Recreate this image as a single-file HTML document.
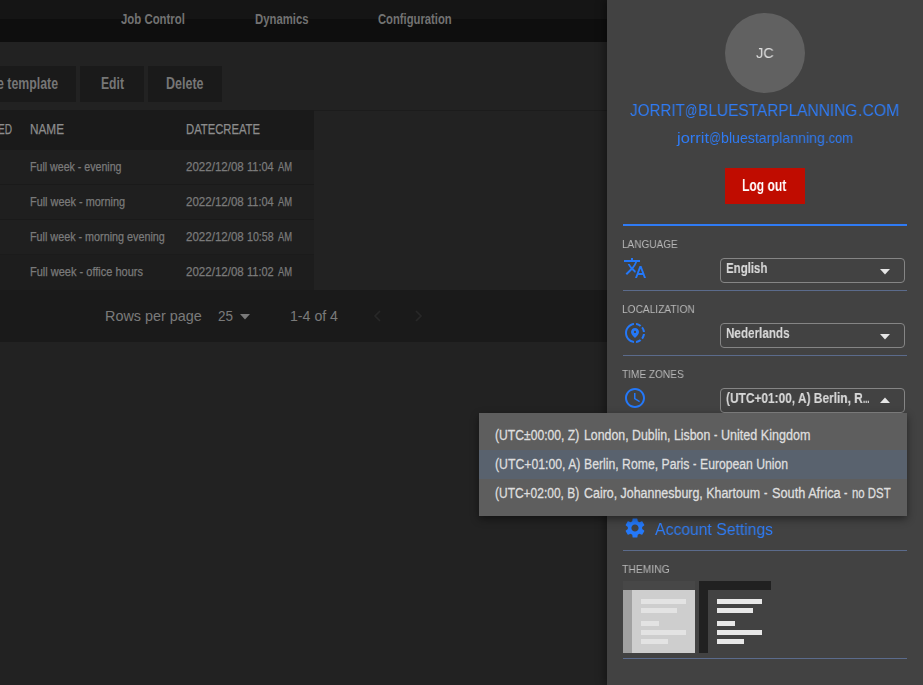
<!DOCTYPE html>
<html><head><meta charset="utf-8"><title>Templates</title>
<style>
html,body{margin:0;padding:0;}
body{width:923px;height:685px;overflow:hidden;position:relative;background:#1e1e1e;font-family:"Liberation Sans",sans-serif;}
.a{position:absolute;}
.t{position:absolute;white-space:nowrap;transform-origin:0 50%;font-family:"Liberation Sans",sans-serif;}
.sel{left:720px;width:183px;height:23px;border:1px solid #858585;border-radius:4px;}
.div{left:623px;width:284px;height:1px;background:#5b6b8c;}
.lb{height:4.8px;background:#e3e3e3;}
.db{height:4.8px;background:#e7e7e7;}
.g{will-change:transform;}

</style></head>
<body>
<!-- left (dimmed) app area -->
<div class="a" style="left:0;top:0;width:607px;height:19px;background:#151515"></div>
<div class="a" style="left:0;top:19px;width:607px;height:23px;background:#0e0e0e"></div>
<div class="a" style="left:0;top:42px;width:607px;height:643px;background:#222222"></div>
<!-- toolbar buttons -->
<div class="a" style="left:-20px;top:66px;width:96px;height:36px;background:#1a1a1a"></div>
<div class="a" style="left:80px;top:66px;width:64px;height:36px;background:#1a1a1a"></div>
<div class="a" style="left:148px;top:66px;width:74px;height:36px;background:#1a1a1a"></div>
<div class="a" style="left:0;top:110px;width:607px;height:1px;background:#1c1c1c"></div>
<!-- table -->
<div class="a" style="left:0;top:110px;width:314px;height:40px;background:#1a1a1a"></div>
<div class="a" style="left:0;top:150px;width:314px;height:105px;background:#1f1f1f"></div>
<div class="a" style="left:0;top:254px;width:314px;height:36px;background:#1d1d1d"></div>
<div class="a" style="left:0;top:254px;width:314px;height:1px;background:#1b1b1b"></div>
<div class="a" style="left:0;top:184px;width:314px;height:1px;background:#1a1a1a"></div>
<div class="a" style="left:0;top:219px;width:314px;height:1px;background:#1a1a1a"></div>
<!-- pagination -->
<div class="a" style="left:0;top:290px;width:607px;height:52px;background:#1a1a1a"></div>
<svg class="a" style="left:240px;top:313.5px" width="10" height="6" viewBox="0 0 10 6"><path d="M0 0h10L5 5.6z" fill="#7a7a7a"/></svg>
<svg class="a" style="left:373px;top:310px" width="10" height="12" viewBox="0 0 10 12"><path d="M7 1L2 6l5 5" stroke="#282828" stroke-width="1.6" fill="none"/></svg>
<svg class="a" style="left:413px;top:310px" width="10" height="12" viewBox="0 0 10 12"><path d="M3 1l5 5-5 5" stroke="#282828" stroke-width="1.6" fill="none"/></svg>

<!-- right drawer -->
<div class="a" style="left:607px;top:0;width:316px;height:685px;background:#424242;box-shadow:-3px 0 8px rgba(0,0,0,.35)"></div>
<div class="a" style="left:725px;top:13px;width:80px;height:80px;border-radius:50%;background:#616161"></div>
<div class="a" style="left:725px;top:168px;width:80px;height:36px;background:#c00c00"></div>
<div class="a" style="left:623px;top:224px;width:284px;height:2px;background:#2f7bf5"></div>
<!-- selects -->
<div class="a sel" style="top:258px"></div>
<div class="a sel" style="top:323px"></div>
<div class="a sel" style="top:388px"></div>
<svg class="a" style="left:880px;top:269px" width="10" height="6" viewBox="0 0 10 6"><path d="M0 0h10L5 5.5z" fill="#e6e6e6"/></svg>
<svg class="a" style="left:880px;top:334px" width="10" height="6" viewBox="0 0 10 6"><path d="M0 0h10L5 5.5z" fill="#e6e6e6"/></svg>
<svg class="a" style="left:880px;top:397px" width="10" height="6" viewBox="0 0 10 6"><path d="M0 6h10L5 0.5z" fill="#e6e6e6"/></svg>
<!-- dividers -->
<div class="a div" style="top:290px"></div>
<div class="a div" style="top:355px"></div>
<div class="a div" style="top:550px"></div>
<div class="a div" style="top:658px"></div>
<!-- icons -->
<svg class="a" style="left:623px;top:256px" width="24" height="24" viewBox="0 0 24 24"><path fill="#2478f8" d="M12.87 15.07l-2.54-2.51.03-.03A17.52 17.52 0 0 0 14.07 6H17V4h-7V2H8v2H1v1.99h11.17C11.5 7.92 10.44 9.75 9 11.35 8.07 10.32 7.3 9.19 6.69 8h-2c.73 1.63 1.73 3.17 2.98 4.56l-5.09 5.02L4 19l5-5 3.11 3.11.76-2.04zM18.5 10h-2L12 22h2l1.12-3h4.75L21 22h2l-4.5-12zm-2.62 7l1.62-4.33L19.12 17h-3.24z"/></svg>
<svg class="a" style="left:623px;top:321px" width="24" height="24" viewBox="0 0 24 24"><path fill="#2478f8" d="M13.02 19.93v2.02c2.01-.2 3.84-1 5.32-2.21l-1.42-1.43c-1.11.86-2.44 1.44-3.9 1.62zM4.03 12c0-4.05 3.03-7.41 6.95-7.93V2.05C5.95 2.58 2.03 6.84 2.03 12c0 5.16 3.92 9.42 8.95 9.95v-2.02c-3.92-.52-6.95-3.88-6.95-7.93zm15.92-1h2.02c-.2-2.01-1-3.84-2.21-5.32l-1.43 1.43c.86 1.1 1.44 2.43 1.62 3.89zm-1.61-6.74c-1.48-1.21-3.32-2.01-5.32-2.21v2.02c1.46.18 2.79.76 3.9 1.62l1.42-1.43zm-.01 12.64l1.43 1.42c1.21-1.48 2.01-3.31 2.21-5.32h-2.02c-.18 1.46-.76 2.79-1.62 3.9zM16 11.1C16 8.61 14.1 7 12 7s-4 1.61-4 4.1c0 1.66 1.33 3.63 4 5.9 2.67-2.27 4-4.24 4-5.9zM12 12c-.59 0-1.07-.48-1.07-1.07 0-.59.48-1.07 1.07-1.07s1.07.48 1.07 1.07c0 .59-.48 1.07-1.07 1.07z"/></svg>
<svg class="a" style="left:623px;top:386px" width="24" height="24" viewBox="0 0 24 24"><path fill="#2478f8" d="M11.99 2C6.47 2 2 6.48 2 12s4.47 10 9.99 10C17.52 22 22 17.52 22 12S17.52 2 11.99 2zM12 20c-4.42 0-8-3.58-8-8s3.58-8 8-8 8 3.58 8 8-3.58 8-8 8zm.5-13H11v6l5.25 3.15.75-1.23-4.5-2.67z"/></svg>
<svg class="a" style="left:623px;top:516px" width="24" height="24" viewBox="0 0 24 24"><path fill="#2478f8" d="M19.14 12.94c.04-.3.06-.61.06-.94 0-.32-.02-.64-.07-.94l2.03-1.58a.49.49 0 0 0 .12-.61l-1.92-3.32a.488.488 0 0 0-.59-.22l-2.39.96c-.5-.38-1.03-.7-1.62-.94l-.36-2.54a.484.484 0 0 0-.48-.41h-3.84c-.24 0-.43.17-.47.41l-.36 2.54c-.59.24-1.13.57-1.62.94l-2.39-.96c-.22-.08-.47 0-.59.22L2.74 8.87c-.12.21-.08.47.12.61l2.03 1.58c-.05.3-.09.63-.09.94s.02.64.07.94l-2.03 1.58a.49.49 0 0 0-.12.61l1.92 3.32c.12.22.37.29.59.22l2.39-.96c.5.38 1.03.7 1.62.94l.36 2.54c.05.24.24.41.48.41h3.84c.24 0 .44-.17.47-.41l.36-2.54c.59-.24 1.13-.56 1.62-.94l2.39.96c.22.08.47 0 .59-.22l1.92-3.32c.12-.22.07-.47-.12-.61l-2.01-1.58zM12 15.6c-1.98 0-3.6-1.62-3.6-3.6s1.62-3.6 3.6-3.6 3.6 1.62 3.6 3.6-1.62 3.6-3.6 3.6z"/></svg>
<!-- theme thumbs -->
<div class="a" style="left:623px;top:581px;width:72px;height:72px;background:#cecece"></div>
<div class="a" style="left:623px;top:581px;width:72px;height:9px;background:#474747"></div>
<div class="a" style="left:623px;top:590px;width:9px;height:63px;background:#a1a1a1"></div>
<div class="a lb" style="left:641px;top:598.8px;width:45px"></div>
<div class="a lb" style="left:641px;top:607.8px;width:36px"></div>
<div class="a lb" style="left:641px;top:621.3px;width:18px"></div>
<div class="a lb" style="left:641px;top:630.3px;width:45px"></div>
<div class="a lb" style="left:641px;top:639.4px;width:27px"></div>
<div class="a" style="left:699px;top:581px;width:72px;height:72px;background:#424242"></div>
<div class="a" style="left:699px;top:581px;width:72px;height:9px;background:#212121"></div>
<div class="a" style="left:699px;top:590px;width:9px;height:63px;background:#212121"></div>
<div class="a db" style="left:717px;top:598.8px;width:45px"></div>
<div class="a db" style="left:717px;top:607.8px;width:36px"></div>
<div class="a db" style="left:717px;top:621.3px;width:18px"></div>
<div class="a db" style="left:717px;top:630.3px;width:45px"></div>
<div class="a db" style="left:717px;top:639.4px;width:27px"></div>
<!-- dropdown -->
<div class="a" style="left:479px;top:413px;width:428px;height:103px;background:#5e5e5e;box-shadow:0 3px 8px rgba(0,0,0,.45)"></div>
<div class="a" style="left:479px;top:450px;width:428px;height:29px;background:#59626e"></div>

<span class="t" style="left:121.1px;top:10.4px;font-size:15.3px;line-height:18px;font-weight:700;color:#727272;transform:scaleX(0.7445)">Job Control</span>
<span class="t" style="left:254.8px;top:10.4px;font-size:15.3px;line-height:18px;font-weight:700;color:#727272;transform:scaleX(0.7402)">Dynamics</span>
<span class="t" style="left:378.3px;top:10.4px;font-size:15.3px;line-height:18px;font-weight:700;color:#727272;transform:scaleX(0.7350)">Configuration</span>
<span class="t" style="left:-3.0px;top:73.8px;font-size:16px;line-height:19px;font-weight:700;color:#767676;transform:scaleX(0.7708)">e template</span>
<span class="t" style="left:101.0px;top:73.8px;font-size:16px;line-height:19px;font-weight:700;color:#767676;transform:scaleX(0.7611)">Edit</span>
<span class="t" style="left:166.0px;top:73.8px;font-size:16px;line-height:19px;font-weight:700;color:#767676;transform:scaleX(0.7807)">Delete</span>
<span class="t" style="left:-2.0px;top:121.0px;font-size:14px;line-height:17px;font-weight:400;color:#8c8c8c;-webkit-text-stroke:0.25px #8c8c8c;transform:scaleX(0.7197)">ED</span>
<span class="t" style="left:30.0px;top:121.0px;font-size:14px;line-height:17px;font-weight:400;color:#8c8c8c;-webkit-text-stroke:0.25px #8c8c8c;transform:scaleX(0.8405)">NAME</span>
<span class="t" style="left:186.0px;top:121.0px;font-size:14px;line-height:17px;font-weight:400;color:#8c8c8c;-webkit-text-stroke:0.25px #8c8c8c;transform:scaleX(0.8039)">DATECREATE</span>
<span class="t" style="left:30.0px;top:159.9px;font-size:12.25px;line-height:15px;font-weight:400;color:#7a7a7a;-webkit-text-stroke:0.25px #7a7a7a;transform:scaleX(0.8669)">Full week - evening</span>
<span class="t" style="left:185.8px;top:159.9px;font-size:12.25px;line-height:15px;font-weight:400;color:#7a7a7a;-webkit-text-stroke:0.25px #7a7a7a;transform:scaleX(0.9427)">2022/12/08</span>
<span class="t" style="left:247.3px;top:159.9px;font-size:12.25px;line-height:15px;font-weight:400;color:#7a7a7a;-webkit-text-stroke:0.25px #7a7a7a;transform:scaleX(0.8975)">11:04</span>
<span class="t" style="left:278.2px;top:159.9px;font-size:12.25px;line-height:15px;font-weight:400;color:#7a7a7a;-webkit-text-stroke:0.25px #7a7a7a;transform:scaleX(0.7673)">AM</span>
<span class="t" style="left:30.0px;top:194.9px;font-size:12.25px;line-height:15px;font-weight:400;color:#7a7a7a;-webkit-text-stroke:0.25px #7a7a7a;transform:scaleX(0.8888)">Full week - morning</span>
<span class="t" style="left:185.8px;top:194.9px;font-size:12.25px;line-height:15px;font-weight:400;color:#7a7a7a;-webkit-text-stroke:0.25px #7a7a7a;transform:scaleX(0.9427)">2022/12/08</span>
<span class="t" style="left:247.3px;top:194.9px;font-size:12.25px;line-height:15px;font-weight:400;color:#7a7a7a;-webkit-text-stroke:0.25px #7a7a7a;transform:scaleX(0.8975)">11:04</span>
<span class="t" style="left:278.2px;top:194.9px;font-size:12.25px;line-height:15px;font-weight:400;color:#7a7a7a;-webkit-text-stroke:0.25px #7a7a7a;transform:scaleX(0.7673)">AM</span>
<span class="t" style="left:30.0px;top:229.9px;font-size:12.25px;line-height:15px;font-weight:400;color:#7a7a7a;-webkit-text-stroke:0.25px #7a7a7a;transform:scaleX(0.8799)">Full week - morning evening</span>
<span class="t" style="left:185.8px;top:229.9px;font-size:12.25px;line-height:15px;font-weight:400;color:#7a7a7a;-webkit-text-stroke:0.25px #7a7a7a;transform:scaleX(0.9427)">2022/12/08</span>
<span class="t" style="left:247.3px;top:229.9px;font-size:12.25px;line-height:15px;font-weight:400;color:#7a7a7a;-webkit-text-stroke:0.25px #7a7a7a;transform:scaleX(0.8709)">10:58</span>
<span class="t" style="left:278.2px;top:229.9px;font-size:12.25px;line-height:15px;font-weight:400;color:#7a7a7a;-webkit-text-stroke:0.25px #7a7a7a;transform:scaleX(0.7673)">AM</span>
<span class="t" style="left:30.0px;top:264.9px;font-size:12.25px;line-height:15px;font-weight:400;color:#7a7a7a;-webkit-text-stroke:0.25px #7a7a7a;transform:scaleX(0.8987)">Full week - office hours</span>
<span class="t" style="left:185.8px;top:264.9px;font-size:12.25px;line-height:15px;font-weight:400;color:#7a7a7a;-webkit-text-stroke:0.25px #7a7a7a;transform:scaleX(0.9427)">2022/12/08</span>
<span class="t" style="left:247.3px;top:264.9px;font-size:12.25px;line-height:15px;font-weight:400;color:#7a7a7a;-webkit-text-stroke:0.25px #7a7a7a;transform:scaleX(0.8975)">11:02</span>
<span class="t" style="left:278.2px;top:264.9px;font-size:12.25px;line-height:15px;font-weight:400;color:#7a7a7a;-webkit-text-stroke:0.25px #7a7a7a;transform:scaleX(0.7673)">AM</span>
<span class="t" style="left:104.6px;top:307.0px;font-size:15px;line-height:18px;font-weight:400;color:#7a7a7a;transform:scaleX(0.9593)">Rows per page</span>
<span class="t" style="left:218.0px;top:307.0px;font-size:15px;line-height:18px;font-weight:400;color:#7a7a7a;transform:scaleX(0.8989)">25</span>
<span class="t" style="left:290.0px;top:307.0px;font-size:15px;line-height:18px;font-weight:400;color:#7a7a7a;transform:scaleX(0.9435)">1-4 of 4</span>
<span class="t g" style="left:756.3px;top:44.3px;font-size:15px;line-height:18px;font-weight:400;color:#e0e0e0;transform:scaleX(0.9649)">JC</span>
<span class="t g" style="left:630.4px;top:100.6px;font-size:16.8px;line-height:20px;font-weight:400;color:#2f7bf4;transform:scaleX(0.9058)">JORRIT</span>
<span class="t g" style="left:685.4px;top:100.6px;font-size:16.8px;line-height:20px;font-weight:400;color:#2f7bf4;transform:scaleX(0.7215)">@</span>
<span class="t g" style="left:698.2px;top:100.6px;font-size:16.8px;line-height:20px;font-weight:400;color:#2f7bf4;transform:scaleX(0.9201)">BLUESTARPLANNING</span>
<span class="t g" style="left:857.5px;top:100.6px;font-size:16.8px;line-height:20px;font-weight:400;color:#2f7bf4;transform:scaleX(0.9423)">.COM</span>
<span class="t g" style="left:676.6px;top:130.1px;font-size:14.2px;line-height:17px;font-weight:400;color:#2f7bf4;transform:scaleX(1.1633)">jorrit</span>
<span class="t g" style="left:708.8px;top:130.1px;font-size:14.2px;line-height:17px;font-weight:400;color:#2f7bf4;transform:scaleX(0.8191)">@</span>
<span class="t g" style="left:720.8px;top:130.1px;font-size:14.2px;line-height:17px;font-weight:400;color:#2f7bf4;transform:scaleX(0.9969)">bluestarplanning</span>
<span class="t g" style="left:824.5px;top:130.1px;font-size:14.2px;line-height:17px;font-weight:400;color:#2f7bf4;transform:scaleX(0.9073)">.com</span>
<span class="t g" style="left:742.4px;top:175.7px;font-size:16px;line-height:19px;font-weight:700;color:#ffffff;transform:scaleX(0.7554)">Log out</span>
<span class="t g" style="left:622.3px;top:237.9px;font-size:11px;line-height:13px;font-weight:400;color:#b8b8b8;transform:scaleX(0.9110)">LANGUAGE</span>
<span class="t g" style="left:622.3px;top:302.9px;font-size:11px;line-height:13px;font-weight:400;color:#b8b8b8;transform:scaleX(0.9243)">LOCALIZATION</span>
<span class="t g" style="left:622.3px;top:367.9px;font-size:11px;line-height:13px;font-weight:400;color:#b8b8b8;transform:scaleX(0.9177)">TIME ZONES</span>
<span class="t g" style="left:622.3px;top:562.9px;font-size:11px;line-height:13px;font-weight:400;color:#b8b8b8;transform:scaleX(0.9402)">THEMING</span>
<span class="t g" style="left:726.0px;top:259.3px;font-size:15.4px;line-height:18px;font-weight:700;color:#d8d8d8;-webkit-text-stroke:0.15px #d8d8d8;transform:scaleX(0.7447)">English</span>
<span class="t g" style="left:726.0px;top:324.3px;font-size:15.4px;line-height:18px;font-weight:700;color:#d8d8d8;-webkit-text-stroke:0.15px #d8d8d8;transform:scaleX(0.7587)">Nederlands</span>
<span class="t g" style="left:726.0px;top:389.3px;font-size:15.4px;line-height:18px;font-weight:700;color:#d8d8d8;-webkit-text-stroke:0.15px #d8d8d8;transform:scaleX(0.7734)">(UTC+01:00, A) Berlin, R</span>
<span class="t g" style="left:863.4px;top:389.3px;font-size:15.4px;line-height:18px;font-weight:700;color:#d8d8d8;-webkit-text-stroke:0.15px #d8d8d8;transform:scaleX(0.4989)">...</span>
<span class="t" style="left:495.2px;top:426.5px;font-size:14px;line-height:17px;font-weight:400;color:#dedede;-webkit-text-stroke:0.30px #dedede;transform:scaleX(0.8666)">(UTC±00:00, Z)</span>
<span class="t" style="left:583.7px;top:426.5px;font-size:14px;line-height:17px;font-weight:400;color:#dedede;-webkit-text-stroke:0.30px #dedede;transform:scaleX(0.8818)">London, Dublin, Lisbon</span>
<span class="t" style="left:713.9px;top:426.5px;font-size:14px;line-height:17px;font-weight:400;color:#dedede;-webkit-text-stroke:0.30px #dedede;transform:scaleX(0.7278)">-</span>
<span class="t" style="left:720.7px;top:426.5px;font-size:14px;line-height:17px;font-weight:400;color:#dedede;-webkit-text-stroke:0.30px #dedede;transform:scaleX(0.8974)">United Kingdom</span>
<span class="t" style="left:495.2px;top:455.5px;font-size:14px;line-height:17px;font-weight:400;color:#dedede;-webkit-text-stroke:0.30px #dedede;transform:scaleX(0.8745)">(UTC+01:00, A)</span>
<span class="t" style="left:584.4px;top:455.5px;font-size:14px;line-height:17px;font-weight:400;color:#dedede;-webkit-text-stroke:0.30px #dedede;transform:scaleX(0.8740)">Berlin, Rome, Paris</span>
<span class="t" style="left:693.3px;top:455.5px;font-size:14px;line-height:17px;font-weight:400;color:#dedede;-webkit-text-stroke:0.30px #dedede;transform:scaleX(0.7278)">-</span>
<span class="t" style="left:700.2px;top:455.5px;font-size:14px;line-height:17px;font-weight:400;color:#dedede;-webkit-text-stroke:0.30px #dedede;transform:scaleX(0.8707)">European Union</span>
<span class="t" style="left:495.2px;top:484.5px;font-size:14px;line-height:17px;font-weight:400;color:#dedede;-webkit-text-stroke:0.30px #dedede;transform:scaleX(0.8554)">(UTC+02:00, B)</span>
<span class="t" style="left:584.0px;top:484.5px;font-size:14px;line-height:17px;font-weight:400;color:#dedede;-webkit-text-stroke:0.30px #dedede;transform:scaleX(0.8874)">Cairo, Johannesburg, Khartoum</span>
<span class="t" style="left:764.4px;top:484.5px;font-size:14px;line-height:17px;font-weight:400;color:#dedede;-webkit-text-stroke:0.30px #dedede;transform:scaleX(0.7278)">-</span>
<span class="t" style="left:771.5px;top:484.5px;font-size:14px;line-height:17px;font-weight:400;color:#dedede;-webkit-text-stroke:0.30px #dedede;transform:scaleX(0.9099)">South Africa</span>
<span class="t" style="left:844.3px;top:484.5px;font-size:14px;line-height:17px;font-weight:400;color:#dedede;-webkit-text-stroke:0.30px #dedede;transform:scaleX(0.7278)">-</span>
<span class="t" style="left:851.5px;top:484.5px;font-size:14px;line-height:17px;font-weight:400;color:#dedede;-webkit-text-stroke:0.30px #dedede;transform:scaleX(0.8153)">no DST</span>
<span class="t g" style="left:655.0px;top:519.9px;font-size:16px;line-height:19px;font-weight:400;color:#2f7bf4;transform:scaleX(0.9827)">Account Settings</span>
</body></html>
